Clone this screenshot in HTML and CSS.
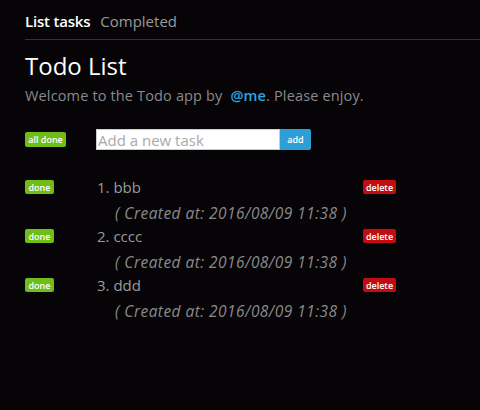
FILE: index.html
```html
<!DOCTYPE html>
<html>
<head>
<meta charset="utf-8">
<link rel="stylesheet" href="styles.css">
</head>
<body>
<div class="page">
  <nav class="nav">
    <span class="nav-item active">List tasks</span>
    <span class="nav-item">Completed</span>
  </nav>
  <h1 class="title">Todo List</h1>
  <p class="welcome">Welcome to the Todo app by <a class="me">@me</a>. Please enjoy.</p>
  <div class="add-row">
    <span class="btn btn-green btn-all">all done</span>
    <div class="add-form">
      <input class="task-input" type="text" placeholder="Add a new task">
      <span class="btn-add">add</span>
    </div>
  </div>
  <ul class="tasks">
    <li class="task">
      <span class="btn btn-green">done</span>
      <div class="task-body">
        <div class="task-name">1. bbb</div>
        <div class="task-date">( Created at: 2016/08/09 11:38 )</div>
      </div>
      <span class="btn btn-red">delete</span>
    </li>
    <li class="task">
      <span class="btn btn-green">done</span>
      <div class="task-body">
        <div class="task-name">2. cccc</div>
        <div class="task-date">( Created at: 2016/08/09 11:38 )</div>
      </div>
      <span class="btn btn-red">delete</span>
    </li>
    <li class="task">
      <span class="btn btn-green">done</span>
      <div class="task-body">
        <div class="task-name">3. ddd</div>
        <div class="task-date">( Created at: 2016/08/09 11:38 )</div>
      </div>
      <span class="btn btn-red">delete</span>
    </li>
  </ul>
</div>
</body>
</html>
```
FILE: styles.css
```css
html, body {
  margin: 0;
  padding: 0;
  background: #060407;
  height: 100%;
}
body {
  font-family: "Open Sans", "DejaVu Sans", sans-serif;
  color: #8a8a8a;
}
.page {
  padding-left: 25px;
}
.nav {
  display: flex;
  gap: 10px;
  height: 40px;
  box-sizing: border-box;
  padding-top: 11px;
  border-bottom: 1px solid #333035;
  font-size: 15px;
  line-height: 20px;
}
.nav-item {
  color: #9a9a9a;
}
.nav-item.active {
  color: #ffffff;
  font-weight: 600;
  letter-spacing: -0.2px;
}
.title {
  margin: 10px 0 0;
  font-size: 24px;
  font-weight: 400;
  line-height: 32px;
  color: #ffffff;
}
.welcome {
  margin: 4px 0 0;
  font-size: 14.5px;
  letter-spacing: 0.15px;
  line-height: 20px;
  color: #8a8a8a;
}
.me {
  color: #2aa6e2;
  font-weight: 600;
  margin-left: 4px;
}
.add-row {
  display: flex;
  align-items: center;
  margin-top: 23px;
}
.btn {
  display: inline-flex;
  align-items: center;
  justify-content: center;
  height: 14px;
  padding: 0;
  border-radius: 2px;
  font-size: 9px;
  font-weight: 600;
  color: #ffffff;
  box-sizing: border-box;
  white-space: nowrap;
}
.btn-green {
  background: #6fbd16;
}
.btn-red {
  background: #c20c10;
}
.btn-all {
  width: 41px;
  height: 15px;
}
.add-form {
  display: flex;
  margin-left: 30px;
}
.task-input {
  width: 184px;
  height: 21px;
  box-sizing: border-box;
  border: 1px solid #ccc;
  padding: 0 1px;
  margin: 0;
  font-family: "Open Sans", "DejaVu Sans", sans-serif;
  font-size: 15px;
  background: #fff;
  outline: none;
}
.task-input::placeholder {
  color: #a9a9a9;
}
.btn-add {
  display: flex;
  align-items: center;
  justify-content: center;
  width: 31px;
  height: 21px;
  background: #2d9fd6;
  color: #fff;
  font-size: 9px;
  font-weight: 600;
  border-radius: 0 2px 2px 0;
}
.tasks {
  list-style: none;
  margin: 30px 0 0;
  padding: 0;
}
.task {
  display: grid;
  grid-template-columns: 72px 266px auto;
  align-items: start;
  height: 49px;
}
.task .btn-green {
  width: 29px;
}
.task .btn-red {
  width: 33px;
}
.task-name {
  font-size: 15px;
  line-height: 14px;
  color: #9a9a9a;
}
.task-date {
  margin-top: 11px;
  padding-left: 18px;
  font-size: 15.5px;
  letter-spacing: 0.45px;
  font-style: italic;
  line-height: 16px;
  color: #8a8a8a;
  white-space: nowrap;
}
```
